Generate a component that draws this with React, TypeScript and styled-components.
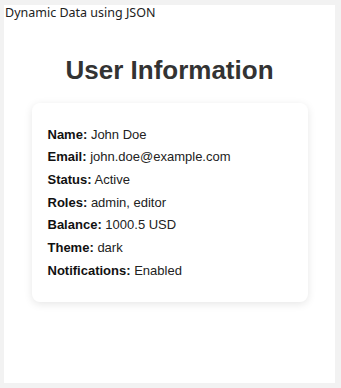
import styled, { createGlobalStyle } from "styled-components";

const GlobalStyle = createGlobalStyle`
    html, body {
        margin: 0;
        background: #f2f2f2;
    }
`

const Frame = styled.div`
    height: 388px;
    box-sizing: border-box;
    padding: 5px 6px 5px 4px;
`

const Panel = styled.main`
    background: #ffffff;
    height: 100%;
    display: flex;
    flex-direction: column;
    align-items: center;
`

const Caption = styled.div`
    align-self: flex-start;
    font-family: "Noto Sans", "Open Sans", sans-serif;
    font-size: 12.5px;
    line-height: 16px;
    color: #222;
    padding-left: 1px;
`

const Title = styled.h1`
    margin: 34px 0 18px;
    font-family: "Liberation Sans", Arial, sans-serif;
    font-size: 26px;
    line-height: 30px;
    font-weight: bold;
    color: #333;
`

const Card = styled.section`
    width: 276px;
    box-sizing: border-box;
    padding: 16px;
    background: #fff;
    border-radius: 8px;
    box-shadow: 0 2px 8px rgba(0, 0, 0, 0.1);
`

const Row = styled.p`
    margin: 7.7px 0;
    font-family: "Liberation Sans", Arial, sans-serif;
    font-size: 13px;
    line-height: 15px;
    color: #222;

    strong {
        color: #111;
    }
`

const user = {
    name: "John Doe",
    email: "john.doe@example.com",
    status: "Active",
    roles: ["admin", "editor"],
    balance: 1000.5,
    currency: "USD",
    theme: "dark",
    notifications: true,
}

export default function App() {
    const rows: [string, string][] = [
        ["Name", user.name],
        ["Email", user.email],
        ["Status", user.status],
        ["Roles", user.roles.join(", ")],
        ["Balance", `${user.balance} ${user.currency}`],
        ["Theme", user.theme],
        ["Notifications", user.notifications ? "Enabled" : "Disabled"],
    ]
    return (
        <>
            <GlobalStyle />
            <Frame>
                <Panel>
                    <Caption>Dynamic Data using JSON</Caption>
                    <Title>User Information</Title>
                    <Card>
                        {rows.map(([label, value]) => (
                            <Row key={label}>
                                <strong>{label}:</strong> {value}
                            </Row>
                        ))}
                    </Card>
                </Panel>
            </Frame>
        </>
    )
}
